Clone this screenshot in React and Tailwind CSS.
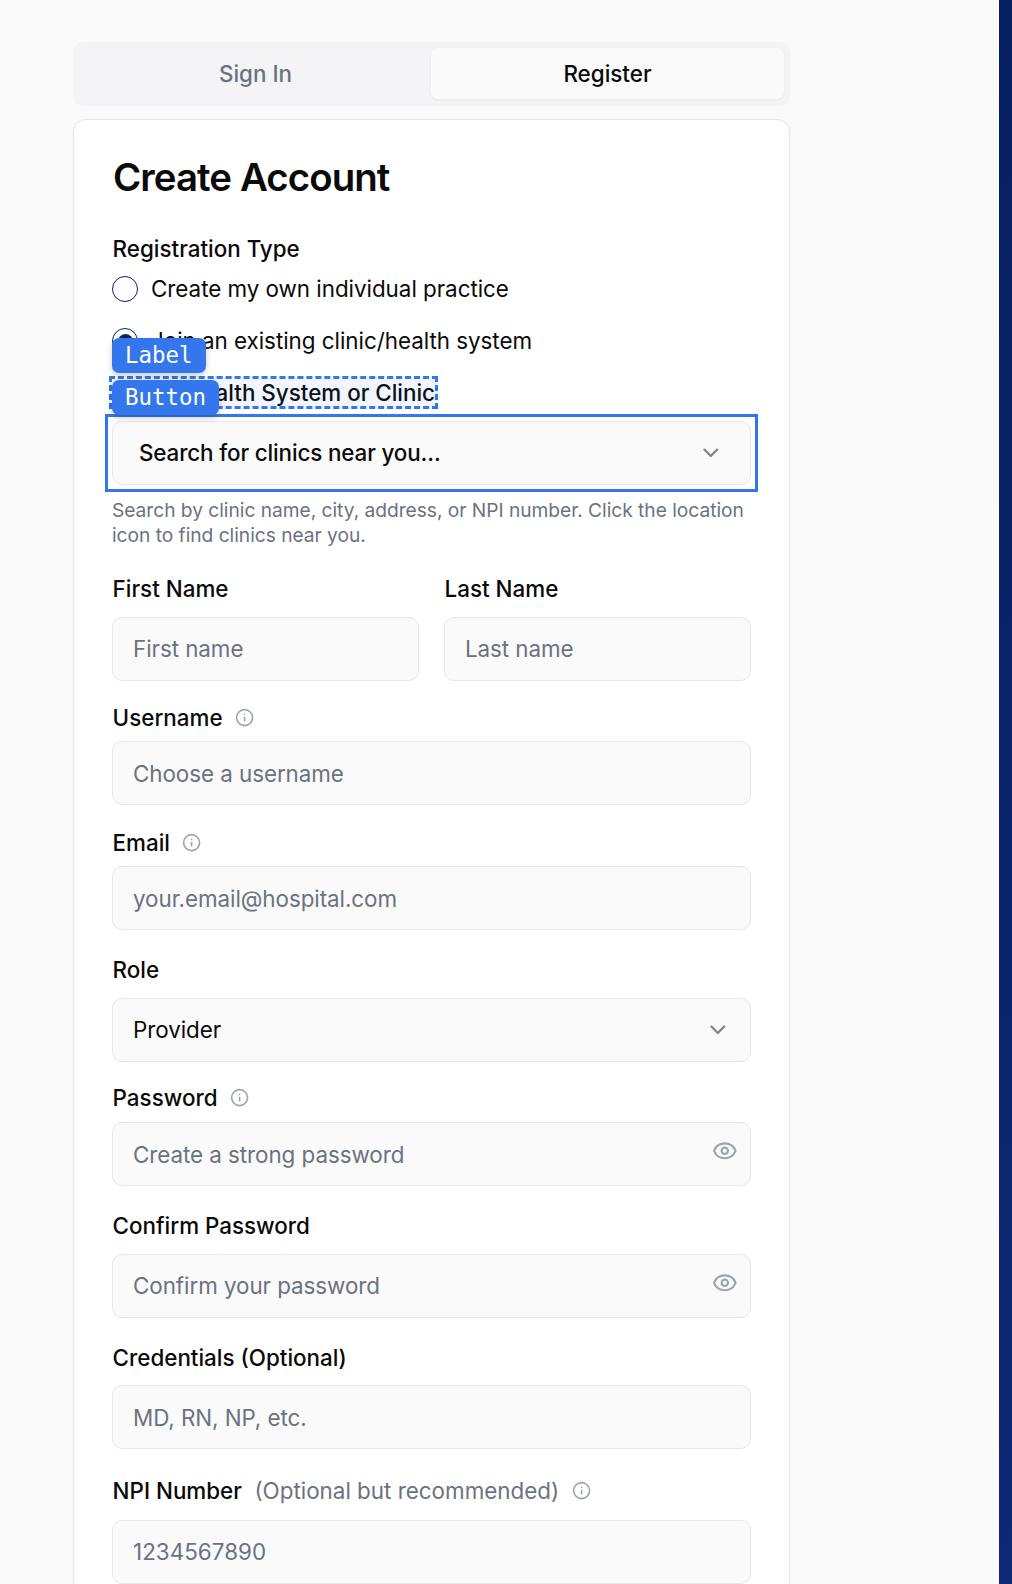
import { ChevronDown, Eye, Info } from "lucide-react";

const inputClass =
  "block h-16 w-full rounded-[10px] border border-[#e5e7eb] bg-[#fafafa] px-5 text-[22.4px] tracking-[-0.06px] text-[#0a0a0a] outline-none placeholder:text-[#6b7280] placeholder:opacity-100";

function Label({ children, info, note, className = "" }) {
  return (
    <div className={`flex h-[25px] items-center whitespace-nowrap ${className}`}>
      <label className="pl-[0.6px] text-[22.4px] leading-[25px] font-medium text-[#0a0a0a]">{children}</label>
      {note && (
        <span className="ml-[12.5px] text-[22.4px] leading-[25px] text-[#6b7280]">{note}</span>
      )}
      {info && <Info className="ml-[12.4px] text-[#9ca3af]" size={19.2} strokeWidth={2} />}
    </div>
  );
}

function PasswordInput({ placeholder, className = "" }) {
  return (
    <div className="relative">
      <input className={`${inputClass} ${className}`} placeholder={placeholder} />
      <Eye className="absolute top-[16px] right-[13px] text-[#9ca3af]" size={25.6} strokeWidth={2} />
    </div>
  );
}

function Radio({ checked, children, className = "" }) {
  return (
    <div className={`flex h-[26px] items-center gap-[13px] ${className}`}>
      <span className="flex size-[26px] items-center justify-center rounded-full border border-[#0b2265]">
        {checked && <span className="size-[15px] rounded-full bg-[#0b2265]" />}
      </span>
      <span className="text-[22.4px] leading-[26px] tracking-[-0.03px]">{children}</span>
    </div>
  );
}

function Tag({ children, className = "" }) {
  return (
    <span
      className={`absolute z-10 flex h-[35px] items-center rounded-[7px] bg-[#3477ec] px-[13px] font-['DejaVu_Sans_Mono',monospace] text-[22.4px] leading-none text-white shadow-[0_3px_6px_rgba(0,0,0,0.2)] ${className}`}
    >
      {children}
    </span>
  );
}

export default function App() {
  return (
    <div className="flex h-[1584px] w-[1012px] overflow-hidden bg-[#fafafa] font-['Inter',sans-serif] text-[#0a0a0a]">
      <main className="w-[999px] shrink-0 pt-[42px] pl-[73px]">
        <div className="flex h-16 w-[717px] rounded-[10px] bg-[#f4f4f6] p-[6px] pb-[7px] text-[22.4px] font-medium">
          <div className="flex w-[352px] items-center justify-center pl-px text-[#6b7280]">Sign In</div>
          <div className="flex w-[353px] items-center justify-center rounded-[7px] bg-[#fafafa] shadow-[0_1px_3px_rgba(0,0,0,0.06)]">
            Register
          </div>
        </div>

        <section className="mt-[13px] h-[1500px] w-[717px] rounded-[13px] border border-[#e5e7eb] bg-white px-[38px] shadow-[0_1px_3px_rgba(0,0,0,0.05)]">
          <h1 className="mt-[38px] h-[38px] pl-px text-[38.4px] leading-[38px] font-semibold tracking-[-0.024em]">
            Create Account
          </h1>

          <Label className="mt-[40px]">Registration Type</Label>
          <Radio className="mt-[15px]">Create my own individual practice</Radio>
          <Radio className="mt-[26px]" checked>
            Join an existing clinic/health system
          </Radio>

          <div className="relative mt-[25px] w-fit">
            <Label className="!h-[27px] pr-[0.4px]">Select Health System or Clinic</Label>
            <div className="absolute -inset-[3px] border-[3px] border-dashed border-[#3477ec] bg-[#3477ec]/[0.07]" />
            <Tag className="-top-[41px] left-0 w-[94px]">Label</Tag>
          </div>

          <div className="relative mt-[15px]">
            <button className="flex h-16 w-full items-center justify-between rounded-[10px] border border-[#e5e7eb] bg-[#fafafa] pr-[26px] pl-[26px] text-[22.4px] font-medium tracking-[-0.13px]">
              Search for clinics near you...
              <ChevronDown className="opacity-50" size={25.6} strokeWidth={2} />
            </button>
            <div className="absolute -inset-[7px] border-[3px] border-[#3477ec]" />
            <Tag className="-top-[41px] left-0 w-[107px]">Button</Tag>
          </div>

          <p className="mt-[13px] h-[50px] text-[19.2px] leading-[25px] tracking-[-0.03px] text-[#6b7280]">
            Search by clinic name, city, address, or NPI number. Click the location icon to find
            clinics near you.
          </p>

          <div className="mt-[28px] grid grid-cols-2 gap-[25px]">
            <div>
              <Label className="mb-[16px]">First Name</Label>
              <input className={`${inputClass} pb-px`} placeholder="First name" />
            </div>
            <div>
              <Label className="mb-[16px]">Last Name</Label>
              <input className={`${inputClass} pb-px`} placeholder="Last name" />
            </div>
          </div>

          <Label className="mt-[24px] mb-[11px]" info>Username</Label>
          <input className={inputClass} placeholder="Choose a username" />

          <Label className="mt-[25px] mb-[11px]" info>Email</Label>
          <input className={inputClass} placeholder="your.email@hospital.com" />

          <Label className="mt-[27px] mb-[16px]">Role</Label>
          <button className="flex h-16 w-full items-center justify-between rounded-[10px] border border-[#e5e7eb] bg-[#fafafa] pr-[19px] pl-5 text-[22.4px] tracking-[-0.06px]">
            Provider
            <ChevronDown className="opacity-50" size={25.6} strokeWidth={2} />
          </button>

          <Label className="mt-[23px] mb-[12px]" info>Password</Label>
          <PasswordInput placeholder="Create a strong password" />

          <Label className="mt-[27px] mb-[16px]">Confirm Password</Label>
          <PasswordInput className="pb-px" placeholder="Confirm your password" />

          <Label className="mt-[27px] mb-[15px]">Credentials (Optional)</Label>
          <input className={inputClass} placeholder="MD, RN, NP, etc." />

          <Label className="mt-[29px] mb-[17px]" note="(Optional but recommended)" info>
            NPI Number
          </Label>
          <input className={`${inputClass} pb-px !tracking-[0.04px]`} placeholder="1234567890" />
        </section>
      </main>
      <aside className="flex-1 bg-linear-to-b from-[#082060] to-[#0d2875]" />
    </div>
  );
}
